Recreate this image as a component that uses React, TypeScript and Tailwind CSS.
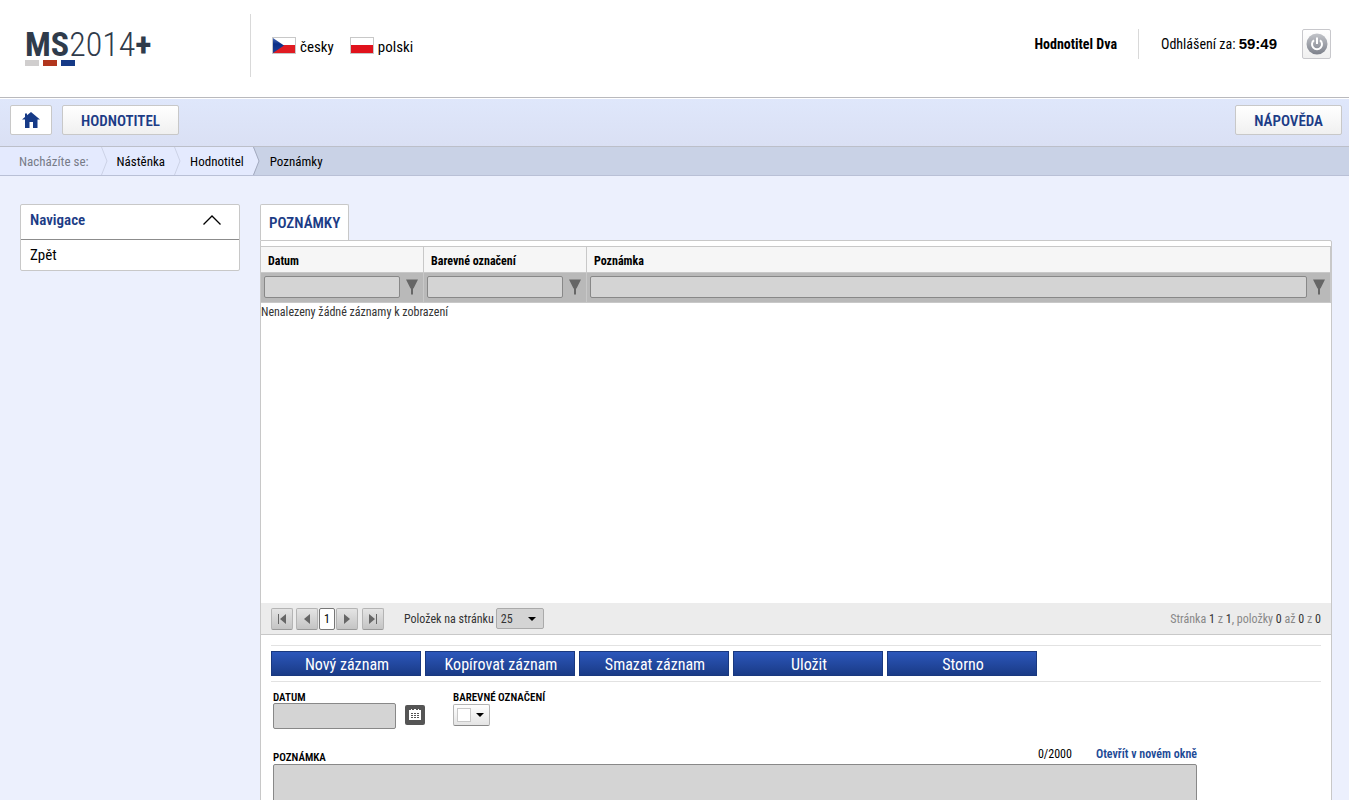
import { useState } from 'react';
import type { ReactNode } from 'react';
import clsx from 'clsx';

const breadcrumbs = ['Nástěnka', 'Hodnotitel'];

const columns = [
  { id: 'datum', label: 'Datum', width: 'w-[163px]' },
  { id: 'barva', label: 'Barevné označení', width: 'w-[163px]' },
  { id: 'poznamka', label: 'Poznámka', width: '' },
];

const actions = ['Nový záznam', 'Kopírovat záznam', 'Smazat záznam', 'Uložit', 'Storno'];

function Logo() {
  return (
    <a href="#" className="flex flex-col text-[#2f3b4b]">
      <span className="text-[34px] leading-8">
        <span className="font-bold">MS</span>
        <span className="font-light">2014</span>
        <span className="font-bold">+</span>
      </span>
      <span className="flex gap-1">
        <span className="h-1.5 w-3.5 bg-[#d0cece]" />
        <span className="h-1.5 w-3.5 bg-[#b1361e]" />
        <span className="h-1.5 w-3.5 bg-[#163a87]" />
      </span>
    </a>
  );
}

function CzechFlag() {
  return (
    <svg width="24" height="17" viewBox="0 0 24 17">
      <defs>
        <linearGradient id="wedge" x1="0" y1="0" x2="0" y2="1">
          <stop offset="0" stopColor="#4a6cb8" />
          <stop offset="0.4" stopColor="#0b2f88" />
          <stop offset="1" stopColor="#1f3f94" />
        </linearGradient>
      </defs>
      <rect x="0.5" y="0.5" width="23" height="16" fill="#fff" stroke="#c8c8c8" />
      <rect x="1" y="8" width="22" height="8" fill="#e01b22" />
      <path d="M1 1L12 8.5L1 16Z" fill="url(#wedge)" />
    </svg>
  );
}

function PolishFlag() {
  return (
    <svg width="24" height="17" viewBox="0 0 24 17">
      <rect x="0.5" y="0.5" width="23" height="16" fill="#fff" stroke="#c8c8c8" />
      <rect x="1" y="8" width="22" height="8" fill="#e0121c" />
    </svg>
  );
}

function PowerIcon() {
  return (
    <svg width="22" height="22" viewBox="0 0 22 22">
      <defs>
        <linearGradient id="power" x1="0" y1="0" x2="0" y2="1">
          <stop offset="0" stopColor="#c3c5ca" />
          <stop offset="1" stopColor="#7d818b" />
        </linearGradient>
      </defs>
      <circle cx="11" cy="11" r="10.5" fill="url(#power)" />
      <path d="M8 7.2A5 5 0 1 0 14 7.2" fill="none" stroke="#fff" strokeWidth="2" />
      <path d="M11 4.5V11" stroke="#fff" strokeWidth="2" />
    </svg>
  );
}

function HomeIcon() {
  return (
    <svg width="18" height="16" viewBox="0 0 18 16" fill="#163a87">
      <path d="M9 0L18 7.5H15.5V16H11V10H7.5V16H3V7.5H0L3 5V1.5H5V3.3Z" />
    </svg>
  );
}

function FilterIcon() {
  return (
    <svg width="12" height="16" viewBox="0 0 12 16" fill="#666">
      <path d="M0 0.5H12L7.5 9.5H7V15.5H5V9.5H4.5Z" />
    </svg>
  );
}

function CalendarIcon() {
  return (
    <svg width="12" height="12" viewBox="0 0 12 12" shapeRendering="crispEdges">
      <path d="M0 1H2V0H3V1H5V0H7V1H9V0H10V1H12V11H0Z" fill="#fff" />
      <path
        d="M2 4h2v1h-2zM5 4h2v1h-2zM8 4h2v1h-2zM2 6h2v1h-2zM5 6h2v1h-2zM8 6h2v1h-2zM2 8h2v1h-2zM5 8h2v1h-2zM8 8h2v1h-2z"
        fill="#555"
      />
    </svg>
  );
}

function CaretIcon() {
  return (
    <svg width="8" height="4" viewBox="0 0 8 4">
      <path d="M0 0H8L4 4Z" fill="#000" />
    </svg>
  );
}

function CrumbArrow({ active = false }: { active?: boolean }) {
  return (
    <svg width="7" height="28" viewBox="0 0 7 28" className="flex-shrink-0">
      {active && <path d="M0 0H7V28H0L6 14Z" fill="#c9d2e6" />}
      <path d="M0.5 0L6 14L0.5 28" fill="none" stroke={active ? '#a3aabf' : '#ccd2e6'} />
    </svg>
  );
}

function NavButton({ children }: { children: ReactNode }) {
  return (
    <button
      type="button"
      className="h-[30px] rounded-xs border border-[#c8c8c8] bg-linear-to-b from-white to-[#f0f0f0] px-[18px] pt-0.5 text-[15px] font-semibold text-[#1c3c86]"
    >
      {children}
    </button>
  );
}

function PagerButton({ label, path }: { label: string; path: string }) {
  return (
    <button
      type="button"
      aria-label={label}
      className="flex h-[22px] w-[22px] items-center justify-center rounded-xs border border-[#b4b4b4] border-b-[#999] bg-linear-to-b from-[#e4e4e4] to-[#c4c4c4]"
    >
      <svg width="10" height="10" viewBox="0 0 10 10" fill="#666">
        <path d={path} />
      </svg>
    </button>
  );
}

export default function App() {
  const [menuOpen, setMenuOpen] = useState(true);
  const [note, setNote] = useState('');
  const [pageSize, setPageSize] = useState('25');

  return (
    <div className="h-screen overflow-hidden bg-[#ecf0fd] font-['Roboto_Condensed','Liberation_Sans_Narrow',Roboto,sans-serif] text-black">
      <header className="flex h-[98px] border-b border-[#b9b9bd] bg-white pr-[18px] pl-[25px]">
        <div className="mt-[14px] flex h-[63px] w-[226px] items-start border-r border-[#d9d9d9] pt-[14px]">
          <Logo />
        </div>
        <div className="flex flex-1 gap-4 pt-[37px] pl-[21px] text-[15px] leading-5">
          <a href="#" className="flex h-5 gap-1">
            <CzechFlag />
            česky
          </a>
          <a href="#" className="flex h-5 gap-1">
            <PolishFlag />
            polski
          </a>
        </div>
        <div className="mt-[29px] flex h-[30px] items-center text-sm">
          <span className="flex h-full items-center border-r border-[#d9d9d9] pr-[21px] font-bold">Hodnotitel Dva</span>
          <span className="pl-[22px]">
            Odhlášení za:{' '}
            <b className="font-['Liberation_Sans',sans-serif] text-[15px] font-bold">59:49</b>
          </span>
          <button
            type="button"
            aria-label="Odhlásit"
            className="ml-[25px] flex h-[30px] w-[29px] items-center justify-center rounded-xs border border-[#c8c8cc] bg-linear-to-b from-white to-[#f0f0f0]"
          >
            <PowerIcon />
          </button>
        </div>
      </header>

      <nav className="flex h-[49px] gap-[10px] border-t border-b border-t-white border-b-[#bcbfc9] bg-linear-to-b from-[#dfe7fb] to-[#dae0f4] pt-[6px] pr-[7px] pl-[10px]">
        <button
          type="button"
          aria-label="Domů"
          className="flex h-[30px] w-[42px] items-center justify-center rounded-xs border border-[#c8c8c8] bg-white"
        >
          <HomeIcon />
        </button>
        <NavButton>HODNOTITEL</NavButton>
        <div className="flex-1" />
        <NavButton>NÁPOVĚDA</NavButton>
      </nav>

      <div className="flex h-[29px] border-b border-[#b9c0d6] bg-[#c9d2e6] text-[13px] leading-[30px]">
        <div className="flex bg-[#e4eafe] pl-[19px]">
          <span className="pr-3 text-[#777c88]">Nacházíte se:</span>
          {breadcrumbs.map((crumb) => (
            <div key={crumb} className="flex">
              <CrumbArrow />
              <a href="#" className="px-[9px]">{crumb}</a>
            </div>
          ))}
          <CrumbArrow active />
        </div>
        <span className="pl-[10px]">Poznámky</span>
      </div>

      <div className="flex items-start gap-5 pt-7 pr-[17px] pl-5">
        <aside className="w-[220px] flex-shrink-0 rounded-xs border border-[#c8c8c8] bg-white">
          <button
            type="button"
            onClick={() => setMenuOpen(!menuOpen)}
            className="flex h-[35px] w-full items-center justify-between border-b border-[#8c8c8c] pr-[17px] pb-1 pl-[9px] text-[15px] font-semibold text-[#1c3c86]"
          >
            Navigace
            <svg width="20" height="10" viewBox="0 0 20 10" className={clsx(!menuOpen && 'rotate-180')}>
              <path d="M1.5 9.5L10 1L18.5 9.5" fill="none" stroke="#000" strokeWidth="1.3" />
            </svg>
          </button>
          {menuOpen && (
            <a href="#" className="block pl-[9px] text-[15px] leading-[30px]">Zpět</a>
          )}
        </aside>

        <main className="min-w-0 flex-1">
          <div className="flex">
            <button
              type="button"
              className="h-9 rounded-t-xs border border-b-0 border-[#c8c8c8] bg-white px-2 pt-px text-[15px] font-semibold text-[#1c3c86]"
            >
              POZNÁMKY
            </button>
          </div>

          <div className="rounded-tr-xs border border-[#c8c8c8] bg-white pt-[5px]">
            <div className="h-[357px]">
              <table className="w-full table-fixed border-separate border-spacing-0 text-left text-xs">
                <thead>
                  <tr className="h-[27px] bg-[#f6f6f6]">
                    {columns.map((column) => (
                      <th
                        key={column.id}
                        className={clsx('border-y border-r border-[#c8c8c8] pt-0.5 pl-[7px] font-bold', column.width)}
                      >
                        {column.label}
                      </th>
                    ))}
                  </tr>
                  <tr className="h-[30px] bg-[#b9b9b9]">
                    {columns.map((column) => (
                      <td key={column.id} className="border-r border-b border-[#c8c8c8] pr-[5px] pb-0.5 pl-[3px]">
                        <div className="flex items-center gap-[6px]">
                          <input
                            aria-label={column.label}
                            className="h-[22px] w-full min-w-0 rounded-xs border border-[#888] bg-[#d4d4d4] px-1"
                          />
                          <button type="button" aria-label={`Filtr ${column.label}`} className="flex-shrink-0">
                            <FilterIcon />
                          </button>
                        </div>
                      </td>
                    ))}
                  </tr>
                </thead>
                <tbody>
                  <tr>
                    <td colSpan={3} className="pt-px text-[#333]">Nenalezeny žádné záznamy k zobrazení</td>
                  </tr>
                </tbody>
              </table>
            </div>

            <div className="flex h-8 items-center border-b border-[#c8c8c8] bg-[#ececec] px-[10px] text-xs text-[#333]">
              <div className="flex gap-[3px]">
                <PagerButton label="První" path="M1 0H2V10H1ZM9 0V10L3 5Z" />
                <PagerButton label="Předchozí" path="M8 0V10L2 5Z" />
              </div>
              <span className="ml-px flex h-[22px] w-4 items-center justify-center rounded-xs border border-[#777] bg-white text-black">1</span>
              <div className="ml-px flex gap-1">
                <PagerButton label="Další" path="M2 0V10L8 5Z" />
                <PagerButton label="Poslední" path="M1 0V10L7 5ZM8 0H9V10H8Z" />
              </div>
              <label htmlFor="pageSize" className="ml-5">Položek na stránku</label>
              <div className="relative ml-0.5">
                <select
                  id="pageSize"
                  value={pageSize}
                  onChange={(e) => setPageSize(e.target.value)}
                  className="block h-[21px] w-12 appearance-none rounded-xs border border-[#aaa] bg-[#d4d4d4] pl-1"
                >
                  <option>10</option>
                  <option>25</option>
                  <option>50</option>
                </select>
                <span className="pointer-events-none absolute inset-y-0 right-2 flex items-center">
                  <CaretIcon />
                </span>
              </div>
              <span className="ml-auto text-[#888]">
                Stránka <span className="text-[#333]">1</span> z <span className="text-[#333]">1</span>, položky{' '}
                <span className="text-[#333]">0</span> až <span className="text-[#333]">0</span> z{' '}
                <span className="text-[#333]">0</span>
              </span>
            </div>

            <div className="px-[10px] pt-[10px]">
              <div className="flex h-[37px] items-center gap-1 border-y border-[#e2e2e2]">
                {actions.map((action) => (
                  <button
                    key={action}
                    type="button"
                    className="h-[25px] w-[150px] border border-[#19387f] bg-linear-to-b from-[#2c57bb] to-[#1a3b87] pt-px pl-0.5 text-base leading-6 text-white"
                  >
                    {action}
                  </button>
                ))}
              </div>

              <div className="mt-[10px] ml-[2px] flex gap-7">
                <div>
                  <label htmlFor="date" className="block text-[11px] leading-[11px] font-semibold">DATUM</label>
                  <div className="flex gap-[9px]">
                    <input id="date" className="h-[26px] w-[123px] rounded-xs border border-[#888] bg-[#d4d4d4] px-1" />
                    <button
                      type="button"
                      aria-label="Kalendář"
                      className="mt-0.5 flex h-5 w-5 items-center justify-center rounded-xs bg-[#555]"
                    >
                      <CalendarIcon />
                    </button>
                  </div>
                </div>
                <div>
                  <label htmlFor="color" className="block text-[11px] leading-[11px] font-semibold">BAREVNÉ OZNAČENÍ</label>
                  <button
                    id="color"
                    type="button"
                    className="mt-px flex h-[22px] w-[37px] items-center justify-between rounded-xs border border-[#b4b4b4] border-b-[#888] bg-linear-to-b from-white to-[#e4e4e4] pr-[5px] pl-[3px]"
                  >
                    <span className="h-[14px] w-[14px] border border-[#c8c8c8] bg-white" />
                    <CaretIcon />
                  </button>
                </div>
              </div>

              <div className="mt-[15px] ml-[2px] w-[924px]">
                <div className="flex h-5 items-center text-xs">
                  <label htmlFor="note" className="self-end text-[11px] leading-3 font-semibold">POZNÁMKA</label>
                  <span className="ml-auto">{note.length}/2000</span>
                  <a href="#" className="ml-6 font-semibold text-[#1c4a96]">Otevřít v novém okně</a>
                </div>
                <textarea
                  id="note"
                  rows={6}
                  maxLength={2000}
                  value={note}
                  onChange={(e) => setNote(e.target.value)}
                  className="block w-full resize-none rounded-xs border border-[#888] bg-[#d4d4d4] p-1 text-sm"
                />
              </div>
            </div>
          </div>
        </main>
      </div>
    </div>
  );
}
